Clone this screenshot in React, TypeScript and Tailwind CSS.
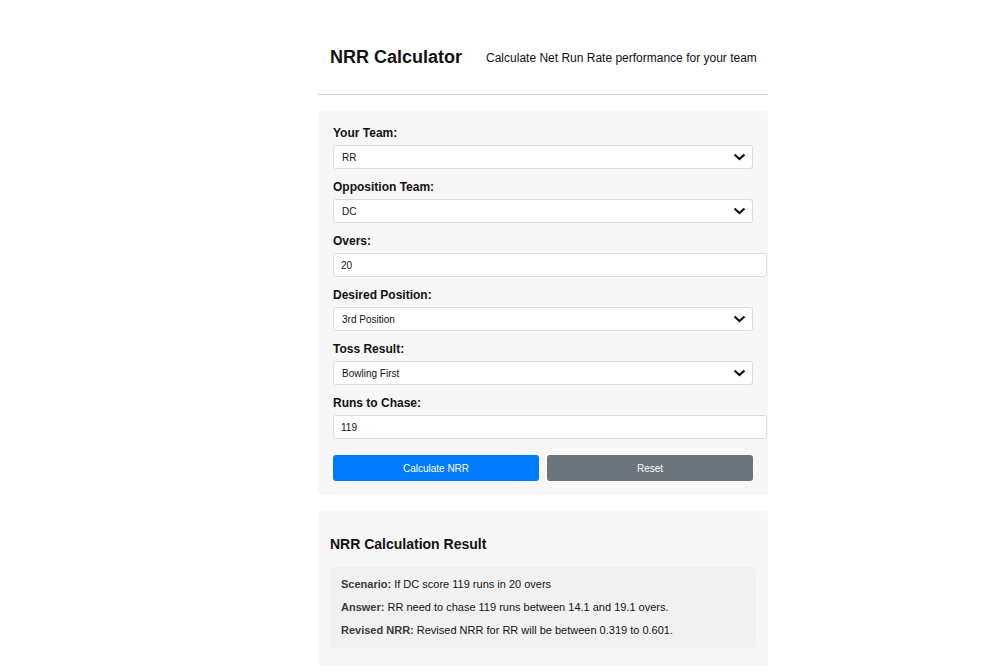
import React from "react";

function Chevron() {
  return (
    <svg width="13" height="8" viewBox="0 0 13 8" className="absolute right-[6px] top-1/2 -translate-y-1/2 pointer-events-none">
      <path d="M1.5 1.5 L6.5 6 L11.5 1.5" fill="none" stroke="#111" strokeWidth="2.2" strokeLinejoin="miter" />
    </svg>
  );
}

function SelectField({ label, value }: { label: string; value: string }) {
  return (
    <div className="mb-[11px]">
      <label className="block text-[12px] leading-[14px] font-bold text-[#111] mb-[5px]">{label}</label>
      <div className="relative w-[420px] h-[24px] bg-white border border-[#dcdcdc] rounded-[3px] flex items-center pl-[8px] text-[10px] text-[#111]">
        {value}
        <Chevron />
      </div>
    </div>
  );
}

function InputField({ label, value }: { label: string; value: string }) {
  return (
    <div className="mb-[11px]">
      <label className="block text-[12px] leading-[14px] font-bold text-[#111] mb-[5px]">{label}</label>
      <input
        readOnly
        value={value}
        className="block w-[434px] h-[24px] bg-white border border-[#dcdcdc] rounded-[3px] pl-[7px] text-[10px] text-[#111] outline-none"
      />
    </div>
  );
}

export default function App() {
  return (
    <div className="min-h-[672px] bg-white font-['Liberation_Sans',Arial,sans-serif]">
      <div className="ml-[318px] w-[450px]">
        <header className="h-[95px] pt-[20px] px-[12px] flex items-center gap-[24px] border-b border-[#cfcfcf] whitespace-nowrap">
          <h1 className="shrink-0 text-[18px] leading-[21px] font-bold text-[#111]">NRR Calculator</h1>
          <p className="shrink-0 text-[12px] leading-[14px] text-[#111] mt-[2px]">Calculate Net Run Rate performance for your team</p>
        </header>

        <div className="mt-[16px] bg-[#f7f7f7] rounded-[4px] px-[15px] pt-[15px] pb-[14px]">
          <SelectField label="Your Team:" value="RR" />
          <SelectField label="Opposition Team:" value="DC" />
          <InputField label="Overs:" value="20" />
          <SelectField label="Desired Position:" value="3rd Position" />
          <SelectField label="Toss Result:" value="Bowling First" />
          <InputField label="Runs to Chase:" value="119" />
          <div className="pt-[5px] flex gap-[8px]">
            <button className="w-[206px] h-[26px] bg-[#007bff] text-white text-[10px] rounded-[3px]">Calculate NRR</button>
            <button className="w-[206px] h-[26px] bg-[#6c757d] text-white text-[10px] rounded-[3px]">Reset</button>
          </div>
        </div>

        <div className="mt-[16px] bg-[#f7f7f7] rounded-[4px] px-[12px] pt-[25px] pb-[18px]">
          <h3 className="text-[14px] leading-[17px] font-bold text-[#111] mb-[14px]">NRR Calculation Result</h3>
          <div className="bg-[#f1f1f1] rounded-[4px] px-[11px] pt-[10px] pb-[11px] flex flex-col gap-[9px] text-[11px] leading-[14px] text-[#111]">
            <p><span className="font-semibold text-[#3a3a3a]">Scenario:</span> If DC score 119 runs in 20 overs</p>
            <p><span className="font-semibold text-[#3a3a3a]">Answer:</span> RR need to chase 119 runs between 14.1 and 19.1 overs.</p>
            <p><span className="font-semibold text-[#3a3a3a]">Revised NRR:</span> Revised NRR for RR will be between 0.319 to 0.601.</p>
          </div>
        </div>
      </div>
    </div>
  );
}
